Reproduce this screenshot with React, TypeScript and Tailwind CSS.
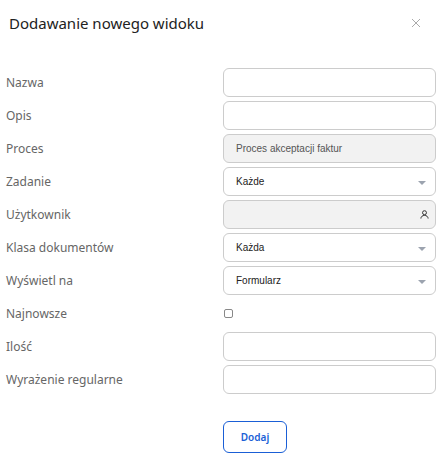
import * as React from 'react';

const Caret = () => (
  <svg width="8" height="5" viewBox="0 0 8 5" className="absolute right-[9px] top-[13px]">
    <path d="M0 0h8L4 4z" fill="#9ca3af" />
  </svg>
);

const rows: { label: string; kind: 'text' | 'disabled' | 'select' | 'user' | 'check'; value?: string }[] = [
  { label: 'Nazwa', kind: 'text' },
  { label: 'Opis', kind: 'text' },
  { label: 'Proces', kind: 'disabled', value: 'Proces akceptacji faktur' },
  { label: 'Zadanie', kind: 'select', value: 'Każde' },
  { label: 'Użytkownik', kind: 'user' },
  { label: 'Klasa dokumentów', kind: 'select', value: 'Każda' },
  { label: 'Wyświetl na', kind: 'select', value: 'Formularz' },
  { label: 'Najnowsze', kind: 'check' },
  { label: 'Ilość', kind: 'text' },
  { label: 'Wyrażenie regularne', kind: 'text' },
];

export default function App() {
  return (
    <div className="w-[443px] h-[458px] bg-white relative" style={{ fontFamily: '"Noto Sans", "Open Sans", sans-serif' }}>
      <div className="flex items-center justify-between pl-[9px] pr-[22px] pt-[12px] h-[34px]">
        <h1 className="text-[15px] text-[#222]">Dodawanie nowego widoku</h1>
        <svg width="10" height="10" viewBox="0 0 10 10">
          <path d="M1 1l8 8M9 1l-8 8" stroke="#aaa" strokeWidth="1" />
        </svg>
      </div>
      <div className="flex flex-col gap-[4px] mt-[34px] pl-[6px] pr-[7px]">
        {rows.map((r) => (
          <div key={r.label} className="flex items-center h-[29px]">
            <span className="w-[217px] text-[12px] text-[#666]">{r.label}</span>
            {r.kind === 'check' ? (
              <div className="w-[9px] h-[9px] border border-[#888] rounded-[2px] ml-[1px]" />
            ) : (
              <div
                className={`relative flex-1 h-[29px] rounded-[6px] border border-[#ccc] flex items-center px-[12px] text-[10px] text-[#222] ${
                  r.kind === 'disabled' || r.kind === 'user' ? 'bg-[#f2f2f2]' : 'bg-white'
                }`}
                style={{ fontFamily: '"Liberation Sans", Arial, sans-serif' }}
              >
                <span className={r.kind === 'disabled' ? 'text-[#555]' : ''}>{r.value}</span>
                {r.kind === 'select' && <Caret />}
                {r.kind === 'user' && (
                  <svg width="9" height="9" viewBox="0 0 10 10" className="absolute right-[6px] top-[9px]">
                    <circle cx="5" cy="3" r="2.2" fill="none" stroke="#222" strokeWidth="1" />
                    <path d="M1 9.5c0-2.2 1.8-3.5 4-3.5s4 1.3 4 3.5" fill="none" stroke="#222" strokeWidth="1" />
                  </svg>
                )}
              </div>
            )}
          </div>
        ))}
      </div>
      <div className="pl-[223px] mt-[27px]">
        <button className="w-[64px] h-[32px] rounded-[6px] border border-[#1a5fd6] text-[#1a5fd6] text-[10px] font-semibold bg-white">
          Dodaj
        </button>
      </div>
    </div>
  );
}
